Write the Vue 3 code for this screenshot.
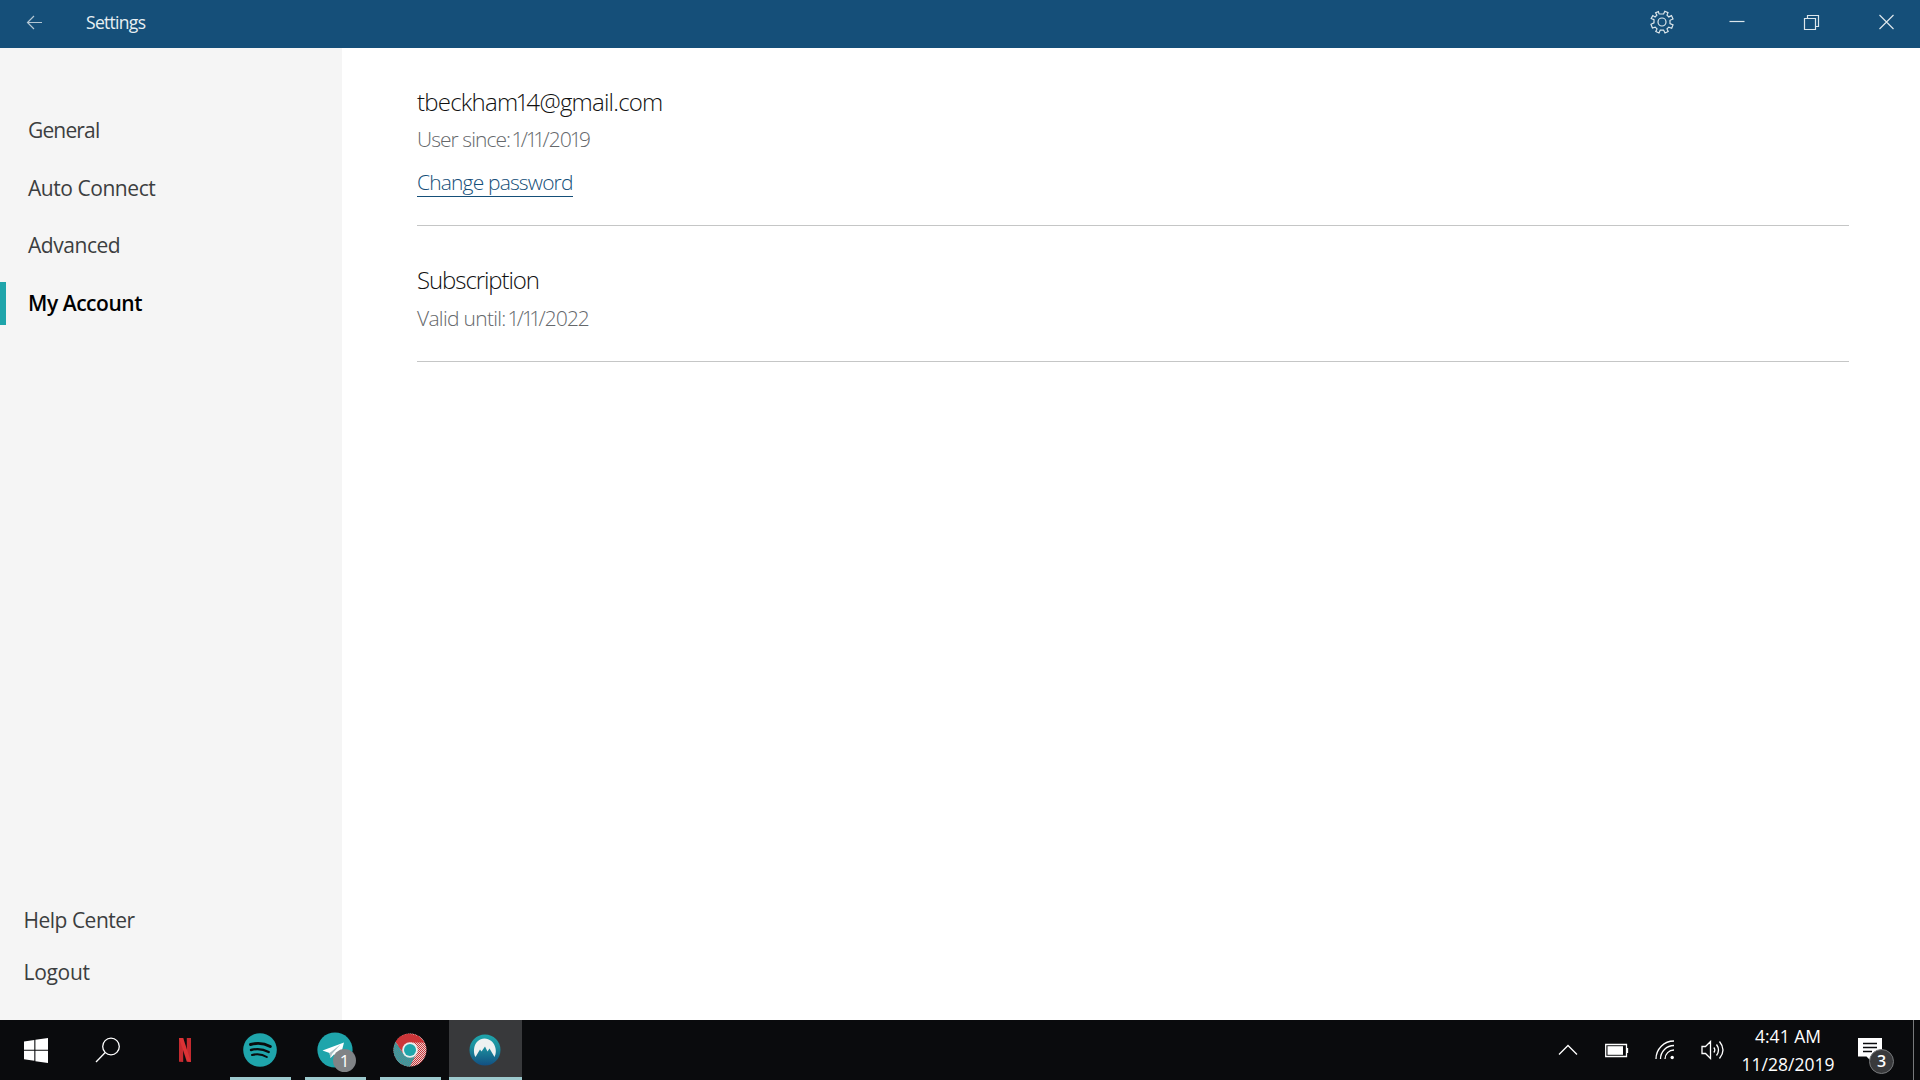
<script setup>
import { ref } from 'vue';

const navItems = [
  { id: 'general', label: 'General' },
  { id: 'auto', label: 'Auto Connect' },
  { id: 'advanced', label: 'Advanced' },
  { id: 'my-account', label: 'My Account' }
];

const activeItem = ref('my-account');

function selectItem(id) {
  activeItem.value = id;
}
</script>

<template>
  <div class="screen">
    <header class="titlebar">
      <button class="back-btn" aria-label="Back">
        <svg width="18" height="18" viewBox="0 0 18 18">
          <path d="M1.500 8.500H16M8 2L1.500 8.500L8 15" />
        </svg>
      </button>
      <span class="title">Settings</span>
      <div class="window-controls">
        <button aria-label="Preferences">
          <svg width="24" height="24" viewBox="0 0 24 24">
            <path d="M9.1 4.1L8.4 1.6L5.6 2.8L6.9 5.1L5.1 6.9L2.8 5.6L1.2 8.4L4 9.6V12.9L1 14.2L2.4 18L5.2 17.1L7 18.9L5.8 21.5L9 23L10.3 20.1H13.6L15 23L18.2 21.5L17 18.9L18.8 17.1L21.7 18.2L23 14.9L20 13.6V10.3L23 9L21.5 5.6L18.8 6.9L17 5.1L18 2.6L14.8 1.3L13.6 4H9.1Z" />
            <circle cx="12" cy="12" r="4" />
          </svg>
        </button>
        <button aria-label="Minimize">
          <svg width="24" height="24" viewBox="0 0 24 24"><path d="M4.500 11.500H19.500" /></svg>
        </button>
        <button aria-label="Restore">
          <svg width="24" height="24" viewBox="0 0 24 24"><path d="M4.500 8.500H15.500V19.500H4.500ZM7.500 8V5.500H18.500V16.500H16" /></svg>
        </button>
        <button aria-label="Close">
          <svg width="24" height="24" viewBox="0 0 24 24"><path d="M4.500 5L18.500 19M18.500 5L4.500 19" /></svg>
        </button>
      </div>
    </header>

    <div class="body">
      <aside class="sidebar">
        <nav>
          <a
            v-for="item in navItems"
            :key="item.id"
            class="nav-item"
            :class="[item.id, { active: activeItem === item.id }]"
            @click="selectItem(item.id)"
          ><span>{{ item.label }}</span></a>
        </nav>
        <div class="sidebar-footer">
          <a class="help">Help Center</a>
          <a class="logout">Logout</a>
        </div>
      </aside>

      <main class="content">
        <section class="account">
          <h2 class="email">tbeckham14@gmail.com</h2>
          <p><span class="since">User since:</span><span class="date-value">1/11/2019</span></p>
          <a class="change-password">Change password</a>
        </section>
        <section class="subscription">
          <h2 class="sub-title">Subscription</h2>
          <p><span class="until">Valid until:</span><span class="date-value">1/11/2022</span></p>
        </section>
      </main>
    </div>

    <footer class="taskbar">
      <div class="task start">
        <svg width="24" height="25" viewBox="0 0 24 25">
          <path fill="#fff" d="M0 3.500L10.300 2V11.700H0ZM11.400 1.800L24 0V11.700H11.400ZM0 12.800H10.300V22.800L0 21.300ZM11.400 12.800H24V25L11.400 23.200Z" />
        </svg>
      </div>
      <div class="task search">
        <svg width="26" height="26" viewBox="0 0 26 26" fill="none" stroke="#fff" stroke-width="1.300">
          <circle cx="16" cy="9.500" r="8.300" />
          <path d="M10.200 15.500L1 25" />
        </svg>
      </div>
      <div class="task netflix">
        <svg width="12" height="24" viewBox="0 0 12 24">
          <path fill="#c42a2f" d="M0 0H4.200V24L0 23.800ZM7.800 0H12V24L7.800 23.500Z" />
          <path fill="#dc3235" d="M0 0H4.200L12 24L7.800 23.500Z" />
        </svg>
      </div>
      <div class="task running">
        <svg width="34" height="34" viewBox="0 0 34 34">
          <circle cx="17" cy="17" r="16.800" fill="#1fa5ab" />
          <g fill="none" stroke="#0a0b0d" stroke-linecap="round">
            <path d="M7.500 11.500C14 9.700 21.500 10.400 27.300 13.600" stroke-width="2.900" />
            <path d="M8 17C14 15.400 20.500 16.200 25.700 19" stroke-width="2.400" />
            <path d="M9 22C14 20.800 19.500 21.300 23.800 24" stroke-width="2" />
          </g>
        </svg>
      </div>
      <div class="task running">
        <svg width="36" height="36" viewBox="0 0 36 36">
          <circle cx="18" cy="18" r="17.600" fill="#1fa5ab" />
          <path fill="#fff" d="M5.500 18.500L27 10.500L23 26L17 22.500L13.500 26L12.500 21Z" />
          <path fill="#a9bfc5" d="M12.500 21L23.500 12.500L15 22L13.500 26Z" />
        </svg>
        <span class="count">1</span>
      </div>
      <div class="task running">
        <svg width="34" height="34" viewBox="0 0 34 34">
          <defs>
            <pattern id="checks" width="2" height="2" patternUnits="userSpaceOnUse">
              <rect width="2" height="2" fill="#e6d3d2" />
              <path fill="#cc3538" d="M0 0H1V1H0ZM1 1H2V2H1Z" />
            </pattern>
            <pattern id="teal-checks" width="2" height="2" patternUnits="userSpaceOnUse">
              <rect width="2" height="2" fill="#1fa5ab" />
              <path fill="#6d8284" d="M0 0H1V1H0ZM1 1H2V2H1Z" />
            </pattern>
          </defs>
          <circle cx="17" cy="17" r="16.500" fill="url(#checks)" />
          <path fill="url(#teal-checks)" d="M2.700 8.800A16.500 16.500 0 0 0 17 33.500L23.500 20L10 20Z" />
          <path fill="#cc3538" d="M2.700 8.800A16.500 16.500 0 0 1 31.300 9.500H17L10 20Z" />
          <circle cx="17" cy="17" r="7.800" fill="#e9eeee" />
          <circle cx="17" cy="17" r="6" fill="#1fa5ab" />
        </svg>
      </div>
      <div class="task running current">
        <svg width="32" height="32" viewBox="0 0 32 32">
          <defs>
            <linearGradient id="nord" x1="0" y1="0" x2="0" y2="1">
              <stop offset="0" stop-color="#1fa5ab" />
              <stop offset=".4" stop-color="#1c8f9e" />
              <stop offset="1" stop-color="#124f82" />
            </linearGradient>
          </defs>
          <circle cx="16" cy="16" r="15.500" fill="url(#nord)" />
          <path fill="#eef1f1" d="M6.500 23C3.500 18 4.500 5 15.500 4.500C26 5 29 17 25.500 23L20.500 14.500L18.500 17.500L16 12.500L12.500 17.500L11 15.500Z" />
        </svg>
      </div>

      <div class="tray">
        <svg class="chevron" width="20" height="12" viewBox="0 0 20 12"><path d="M1 10.500L10 1.500L19 10.500" /></svg>
        <svg class="battery" width="24" height="15" viewBox="0 0 24 15">
          <path d="M.700 1.500H21.500V13.500H.700ZM22.500 5V10" />
          <rect x="2.500" y="3.200" width="15.500" height="8.600" fill="#fff" stroke="none" />
        </svg>
        <svg class="wifi" width="20" height="20" viewBox="0 0 20 20">
          <path d="M1 19A18 18 0 0 1 19 1M5.500 19A13.500 13.500 0 0 1 19 5.500M10 19A9 9 0 0 1 19 10" />
          <circle cx="17.200" cy="17.500" r="1.700" fill="#fff" stroke="none" />
        </svg>
        <svg class="volume" width="24" height="20" viewBox="0 0 24 20">
          <path d="M1 6.500H4.500L9.500 1.500V18.500L4.500 13.500H1ZM12.800 7.500Q14.800 10 12.800 12.500M15.500 4.500Q19.500 10 15.500 15.500M18.500 1.500Q25.500 10 18.500 18.500" />
        </svg>
        <div class="clock">
          <span class="time">4:41 AM</span>
          <span class="date">11/28/2019</span>
        </div>
        <div class="notifications">
          <svg width="24" height="26" viewBox="0 0 24 26">
            <path fill="#fff" stroke="none" d="M0 0H24V18.500H15V25L8.500 18.500H0Z" />
            <path stroke="#0a0b0d" d="M5 5.500H19M5 9.500H19M5 13.500H14" />
          </svg>
          <span class="badge">3</span>
        </div>
        <div class="show-desktop"></div>
      </div>
    </footer>
  </div>
</template>

<style>
body {
  overflow: hidden;
}
</style>

<style scoped>
.screen {
  display: flex;
  flex-direction: column;
  width: 1920px;
  height: 1080px;
  background: #fff;
  font-family: 'Open Sans', 'Noto Sans', sans-serif;
  font-size: 21px;
  color: #3c3e40;
}

.screen svg {
  display: block;
  flex: none;
}

.screen span {
  white-space: nowrap;
}

.titlebar {
  display: flex;
  align-items: center;
  height: 48px;
  flex: none;
  background: #154f79;
  color: #e8eff3;
}

.titlebar button {
  display: flex;
  padding: 0;
  border: none;
  background: none;
}

.titlebar svg {
  fill: none;
  stroke: #dce6eb;
  stroke-width: 1.2;
}

.back-btn {
  width: 61px;
  margin: -3px 0 0 26px;
}

.back-btn svg {
  opacity: 0.8;
}

.title {
  font-size: 17.500px;
  line-height: 24px;
  margin: -4px 0 0 -1px;
  letter-spacing: -0.700px;
}

.window-controls {
  display: flex;
  gap: 51px;
  margin: -4px 21px 0 auto;
}

.body {
  display: flex;
  flex: 1;
}

.sidebar {
  display: flex;
  flex-direction: column;
  justify-content: space-between;
  width: 342px;
  padding: 53.500px 0 22px;
  box-sizing: border-box;
  background: #f5f5f5;
}

.nav-item {
  display: flex;
  align-items: center;
  height: 57.600px;
  padding-left: 28px;
  letter-spacing: -0.450px;
  cursor: pointer;
}

.nav-item.general {
  letter-spacing: -0.850px;
}

.nav-item.active {
  position: relative;
  font-weight: 600;
  color: #000;
}

.nav-item.active::before {
  content: '';
  position: absolute;
  left: 0;
  width: 6px;
  height: 43px;
  background: #1fa5ab;
}

.sidebar-footer a {
  display: flex;
  align-items: center;
  height: 52px;
  padding-left: 23.500px;
  letter-spacing: -0.500px;
}

.sidebar-footer .logout {
  letter-spacing: -0.300px;
}

.content {
  flex: 1;
  padding: 0 71px 0 75px;
  font-weight: 300;
  font-variant-numeric: proportional-nums;
}

.content section {
  display: flex;
  flex-direction: column;
  align-items: flex-start;
  border-bottom: 1px solid #c5c6c6;
}

.account {
  height: 147px;
  padding-top: 30px;
}

.subscription {
  height: 105px;
  padding-top: 30px;
}

.content h2 {
  margin: 0;
  font-size: 24px;
  line-height: 48px;
  font-weight: 300;
  color: #111;
}

.email {
  letter-spacing: -0.780px;
}

.sub-title {
  letter-spacing: -1.080px;
}

.content p {
  display: flex;
  margin: -1px 0 0;
  line-height: 28px;
  color: #65686b;
}

.content .subscription p {
  margin-top: 0;
}

.since {
  width: 96px;
  letter-spacing: -0.950px;
}

.until {
  width: 92px;
  letter-spacing: -0.700px;
}

.date-value {
  letter-spacing: -0.600px;
}

.change-password {
  margin-top: 15px;
  line-height: 28px;
  letter-spacing: -0.840px;
  color: #154f79;
  border-bottom: 1px solid #154f79;
}

.taskbar {
  display: flex;
  height: 60px;
  flex: none;
  background: #0a0b0d;
  color: #fff;
}

.task {
  position: relative;
  display: flex;
  justify-content: center;
  align-items: center;
  width: 75px;
  height: 60px;
  padding-right: 2px;
  box-sizing: border-box;
}

.task.start {
  width: 72px;
  padding-right: 0;
}

.task.search {
  width: 76px;
  padding-right: 4px;
}

.task.running::after {
  content: '';
  position: absolute;
  bottom: 0;
  left: 7px;
  width: 61px;
  height: 3px;
  background: #9cc9cd;
}

.task.current {
  width: 73px;
  margin-left: 1px;
  background: #38393b;
}

.task.current::after {
  left: 0;
  width: 73px;
}

.count,
.badge {
  position: absolute;
  border-radius: 50%;
  text-align: center;
}

.count {
  left: 35px;
  top: 29px;
  width: 23px;
  height: 23px;
  background: #808386;
  font-size: 17px;
  line-height: 23px;
}

.tray {
  display: flex;
  align-items: center;
  margin-left: auto;
}

.tray svg {
  fill: none;
  stroke: #fff;
  stroke-width: 1.3;
}

.battery {
  margin-left: 27px;
}

.wifi {
  margin-left: 26px;
}

.volume {
  margin-left: 26px;
}

.clock {
  display: flex;
  flex-direction: column;
  align-items: center;
  width: 92px;
  margin-left: 17px;
  font-size: 17.500px;
  line-height: 28px;
}

.notifications {
  position: relative;
  margin: 2px 0 0 24px;
}

.badge {
  left: 11px;
  top: 11px;
  width: 23px;
  height: 23px;
  border: 1px solid #77797b;
  background: #393a3c;
  font-size: 16px;
  font-weight: 600;
  line-height: 23px;
}

.show-desktop {
  height: 60px;
  width: 6px;
  margin-left: 31px;
  border-left: 1px solid #77797b;
}
</style>
